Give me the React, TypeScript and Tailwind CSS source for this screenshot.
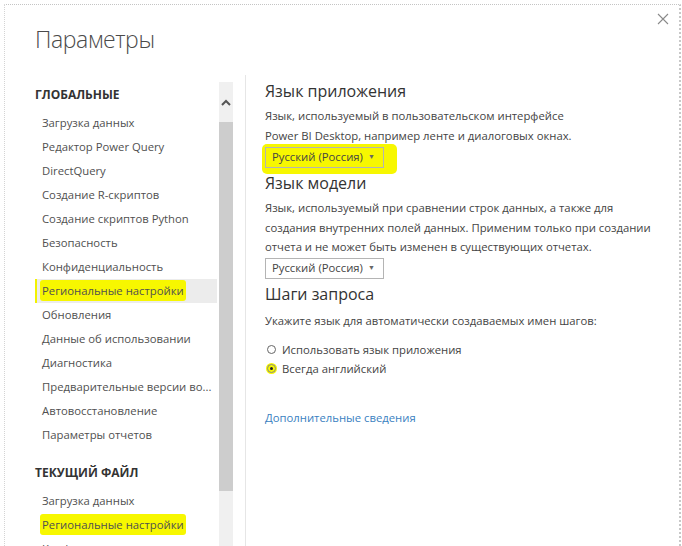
import React from 'react';

const globalItems = [
  'Загрузка данных',
  'Редактор Power Query',
  'DirectQuery',
  'Создание R-скриптов',
  'Создание скриптов Python',
  'Безопасность',
  'Конфиденциальность',
  'Региональные настройки',
  'Обновления',
  'Данные об использовании',
  'Диагностика',
  'Предварительные версии во...',
  'Автовосстановление',
  'Параметры отчетов',
];

const fileItems = ['Загрузка данных', 'Региональные настройки', 'Конфиденциальность'];

const font = { fontFamily: '"Open Sans", "Noto Sans", sans-serif' };

function NavItem({ label, active, marked }: { label: string; active?: boolean; marked?: boolean }) {
  return (
    <div
      className={
        'h-[24px] leading-[24px] text-[11.3px] text-[#505050] whitespace-nowrap ' +
        (active ? 'bg-[#ececec] border-l-2 border-[#f2f200] pl-[5px]' : 'pl-[7px]')
      }
    >
      {marked ? (
        <span className="bg-[#f7f700] rounded-[3px] -ml-[2px] px-[2px] py-[3px]">{label}</span>
      ) : (
        label
      )}
    </div>
  );
}

function Dropdown({ marked, className }: { marked?: boolean; className: string }) {
  const box = (
    <div className="flex items-center h-[21px] w-[119px] border border-[#b4b4b4] pl-[6px] pr-[8px] text-[11.3px] text-[#444] justify-between whitespace-nowrap">
      <span>Русский (Россия)</span>
      <span className="text-[7px] text-[#666]">▼</span>
    </div>
  );
  if (!marked) return <div className={'flex ' + className}>{box}</div>;
  return (
    <div className={'flex ' + className}>
      <div className="bg-[#f7f700] -ml-[3px] pl-[3px] pr-[13px] pt-[3px] pb-[6px] rounded-[5px]">{box}</div>
    </div>
  );
}

export default function App() {
  return (
    <div className="w-[682px] h-[546px] bg-white overflow-hidden" style={font}>
      <div className="ml-[4px] mt-[4px] w-[677px] h-[542px] border-t border-dotted border-t-[#c4c4c4] border-l border-l-[#d4d4d4] border-r-2 border-r-[#c8c8c8] relative">
        {/* close */}
        <svg className="absolute right-[10px] top-[8px]" width="12" height="12" viewBox="0 0 12 12">
          <path d="M1 1 L11 11 M11 1 L1 11" stroke="#8a8a8a" strokeWidth="1.1" />
        </svg>

        {/* title */}
        <div className="h-[65px] pl-[30px] pt-[17px]">
          <div className="text-[23px] leading-[34px] font-light tracking-[-0.4px] text-[#4a4a4a]">Параметры</div>
        </div>

        <div className="flex h-[477px]">
          {/* left nav */}
          <div className="w-[240px] shrink-0 flex pl-[30px]">
            <div className="w-[182px]">
              <div className="pt-[14px] leading-[22px] text-[12px] font-bold text-[#333]">ГЛОБАЛЬНЫЕ</div>
              <div className="mt-[5px]">
                {globalItems.map((it) => (
                  <NavItem
                    key={it}
                    label={it}
                    active={it === 'Региональные настройки'}
                    marked={it === 'Региональные настройки'}
                  />
                ))}
              </div>
              <div className="mt-[15px] leading-[22px] text-[12px] font-bold text-[#333]">ТЕКУЩИЙ ФАЙЛ</div>
              <div className="mt-[5px]">
                {fileItems.map((it, i) => (
                  <NavItem key={it} label={it} marked={i === 1} />
                ))}
              </div>
            </div>
            {/* scrollbar */}
            <div className="ml-[2px] mt-[12px] w-[14px] bg-[#f0f0f0] flex flex-col">
              <div className="h-[40px] flex items-center justify-center">
                <svg width="10" height="7" viewBox="0 0 10 7">
                  <path d="M1 6 L5 2 L9 6" stroke="#555" strokeWidth="2" fill="none" />
                </svg>
              </div>
              <div className="h-[369px] bg-[#cdcdcd]" />
            </div>
          </div>

          {/* divider */}
          <div className="mt-[5px] w-px shrink-0 bg-[#e6e6e6]" />

          {/* right content */}
          <div className="pl-[19px] text-[#444] whitespace-nowrap">
            <div className="pt-[9px] text-[16px] leading-[24px] text-[#333]">Язык приложения</div>
            <div className="mt-[3px] text-[11.3px] leading-[19.5px]">
              <div>Язык, используемый в пользовательском интерфейсе</div>
              <div>Power BI Desktop, например ленте и диалоговых окнах.</div>
            </div>
            <Dropdown marked className="-mt-[1px] -mb-[6px]" />
            <div className="mt-[3px] text-[16px] leading-[24px] text-[#333]">Язык модели</div>
            <div className="mt-[3px] text-[11.3px] leading-[19.5px]">
              <div>Язык, используемый при сравнении строк данных, а также для</div>
              <div>создания внутренних полей данных. Применим только при создании</div>
              <div>отчета и не может быть изменен в существующих отчетах.</div>
            </div>
            <Dropdown className="mt-[1px]" />
            <div className="mt-[3px] text-[16px] leading-[24px] text-[#333]">Шаги запроса</div>
            <div className="mt-[5px] text-[11.3px] leading-[20px]">
              Укажите язык для автоматически создаваемых имен шагов:
            </div>
            <div className="mt-[9px] text-[11.3px] leading-[19px]">
              <div className="flex items-center">
                <span className="w-[9px] h-[9px] rounded-full border-[1.5px] border-[#666] ml-[2px] mr-[6px]" />
                Использовать язык приложения
              </div>
              <div className="flex items-center">
                <span className="w-[11px] h-[11px] rounded-full bg-[#f7f700] ml-[1px] mr-[5px] flex items-center justify-center">
                  <span className="w-[9px] h-[9px] rounded-full border border-[#888] flex items-center justify-center">
                    <span className="w-[3px] h-[3px] rounded-full bg-[#222]" />
                  </span>
                </span>
                Всегда английский
              </div>
            </div>
            <div className="mt-[30px] text-[11.3px] leading-[20px] text-[#3a7fc1]">Дополнительные сведения</div>
          </div>
        </div>
      </div>
    </div>
  );
}
